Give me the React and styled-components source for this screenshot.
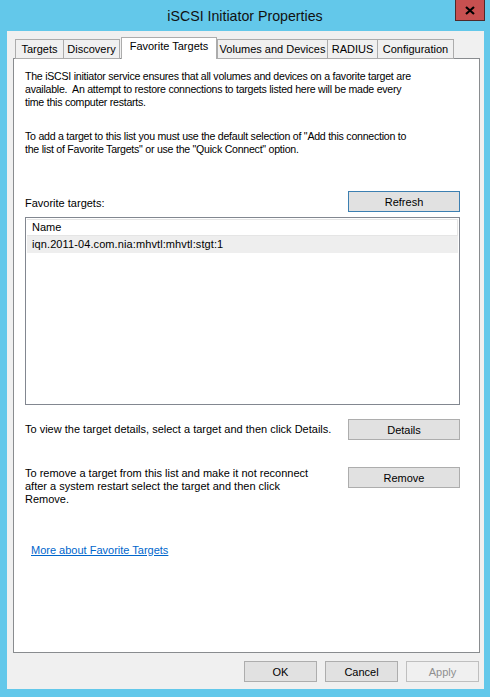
import React from "react";
import styled, { createGlobalStyle } from "styled-components";

const Global = createGlobalStyle`
  html, body { margin: 0; padding: 0; background: #63c8ea; }
  * { box-sizing: border-box; }
`;

const FONT = `"Liberation Sans", Arial, sans-serif`;

const Window = styled.div`
  width: 490px;
  height: 697px;
  background: #63c8ea;
  display: flex;
  flex-direction: column;
  font-family: ${FONT};
  font-size: 11px;
  color: #000;
`;

const TitleBar = styled.div`
  height: 31px;
  display: grid;
  grid-template-columns: 1fr auto 1fr;
  align-items: start;
`;

const Title = styled.div`
  grid-column: 2;
  font-size: 14.2px;
  line-height: 16px;
  padding-top: 8px;
  color: #111;
`;

const CloseButton = styled.div`
  grid-column: 3;
  justify-self: end;
  margin-right: 5px;
  width: 30px;
  height: 21px;
  background: #c75050;
  border: 1px solid #4f2a2a;
  border-top: none;
  display: flex;
  align-items: center;
  justify-content: center;
`;

const Client = styled.div`
  flex: 1;
  margin: 0 6px 8px 7px;
  background: #f0f0f0;
  display: flex;
  flex-direction: column;
  padding: 7px 4px 7px 6px;
`;

const TabStrip = styled.div`
  height: 21px;
  display: flex;
  align-items: flex-end;
  padding-left: 2px;
  position: relative;
  z-index: 1;
  margin-bottom: -1px;
`;

const Tab = styled.div`
  width: ${(p) => p.$w}px;
  height: ${(p) => (p.$active ? 22 : 20)}px;
  margin-left: ${(p) => (p.$active ? 2 : 0)}px;
  margin-right: ${(p) => (p.$active ? 0 : -1)}px;
  background: ${(p) => (p.$active ? "#fff" : "#f0f0f0")};
  border: 1px solid #acacac;
  border-bottom: ${(p) => (p.$active ? "none" : "1px solid #acacac")};
  display: flex;
  justify-content: center;
  align-items: flex-start;
  padding-top: ${(p) => (p.$active ? 2 : 3)}px;
  font-size: 11px;
  line-height: 13px;
  white-space: nowrap;
  position: relative;
  z-index: ${(p) => (p.$active ? 2 : 1)};
`;

const Panel = styled.div`
  height: 595px;
  background: #fff;
  border: 1px solid #898c8f;
  padding: 11px 19px 0 11px;
  display: flex;
  flex-direction: column;
`;

const Para = styled.p`
  margin: 0 0 ${(p) => p.$mb || 0}px 0;
  line-height: 13px;
  white-space: nowrap;
  font-size: 10.6px;
  letter-spacing: -0.25px;
`;

const Row = styled.div`
  display: flex;
  justify-content: space-between;
  align-items: ${(p) => p.$align || "flex-start"};
  margin-top: ${(p) => p.$mt || 0}px;
`;

const Label = styled.div`
  line-height: 13px;
  padding-top: ${(p) => p.$pt || 0}px;
  white-space: nowrap;
`;

const Button = styled.div`
  width: ${(p) => p.$w || 112}px;
  height: 21px;
  flex-shrink: 0;
  background: ${(p) => (p.$disabled ? "#f0f0f0" : "#e1e1e1")};
  border: 1px solid
    ${(p) => (p.$focus ? "#3c7fb1" : p.$disabled ? "#bfbfbf" : "#adadad")};
  color: ${(p) => (p.$disabled ? "#8f8f8f" : "#000")};
  display: flex;
  align-items: center;
  justify-content: center;
  font-size: 11px;
`;

const ListBox = styled.div`
  margin-top: 5px;
  height: 188px;
  border: 1px solid #828790;
  padding: 1px;
  display: flex;
  flex-direction: column;
`;

const ListHeader = styled.div`
  height: 17px;
  border: 1px solid #e5e5e5;
  border-left: none;
  display: flex;
  align-items: center;
  padding-left: 5px;
  line-height: 13px;
`;

const ListRow = styled.div`
  height: 17px;
  background: #eeeeee;
  display: flex;
  align-items: center;
  padding-left: 5px;
  line-height: 13px;
  letter-spacing: 0.1px;
`;

const Link = styled.a`
  margin: 38px 0 0 6px;
  color: #0066cc;
  text-decoration: underline;
  line-height: 13px;
  align-self: flex-start;
`;

const Footer = styled.div`
  display: flex;
  justify-content: flex-end;
  gap: 8px;
  padding-top: 8px;
  padding-right: 1px;
`;

export default function App() {
  return (
    <Window>
      <Global />
      <TitleBar>
        <Title>iSCSI Initiator Properties</Title>
        <CloseButton>
          <svg width="10" height="9" viewBox="0 0 10 9">
            <path d="M1 1 L9 8 M9 1 L1 8" stroke="#000" strokeWidth="2.2" />
          </svg>
        </CloseButton>
      </TitleBar>
      <Client>
        <TabStrip>
          <Tab $w={49}>Targets</Tab>
          <Tab $w={57}>Discovery</Tab>
          <Tab $w={96} $active>
            Favorite Targets
          </Tab>
          <Tab $w={111}>Volumes and Devices</Tab>
          <Tab $w={51}>RADIUS</Tab>
          <Tab $w={77}>Configuration</Tab>
        </TabStrip>
        <Panel>
          <Para $mb={21}>
            The iSCSI initiator service ensures that all volumes and devices on a favorite target are
            <br />
            available.&nbsp; An attempt to restore connections to targets listed here will be made every
            <br />
            time this computer restarts.
          </Para>
          <Para>
            To add a target to this list you must use the default selection of "Add this connection to
            <br />
            the list of Favorite Targets" or use the "Quick Connect" option.
          </Para>
          <Row $mt={35}>
            <Label $pt={6}>Favorite targets:</Label>
            <Button $focus>Refresh</Button>
          </Row>
          <ListBox>
            <ListHeader>Name</ListHeader>
            <ListRow>iqn.2011-04.com.nia:mhvtl:mhvtl:stgt:1</ListRow>
          </ListBox>
          <Row $mt={14} $align="center">
            <Label>To view the target details, select a target and then click Details.</Label>
            <Button>Details</Button>
          </Row>
          <Row $mt={27}>
            <Label>
              To remove a target from this list and make it not reconnect
              <br />
              after a system restart select the target and then click
              <br />
              Remove.
            </Label>
            <Button>Remove</Button>
          </Row>
          <Link href="#">More about Favorite Targets</Link>
        </Panel>
        <Footer>
          <Button $w={73}>OK</Button>
          <Button $w={73}>Cancel</Button>
          <Button $w={73} $disabled>
            Apply
          </Button>
        </Footer>
      </Client>
    </Window>
  );
}
